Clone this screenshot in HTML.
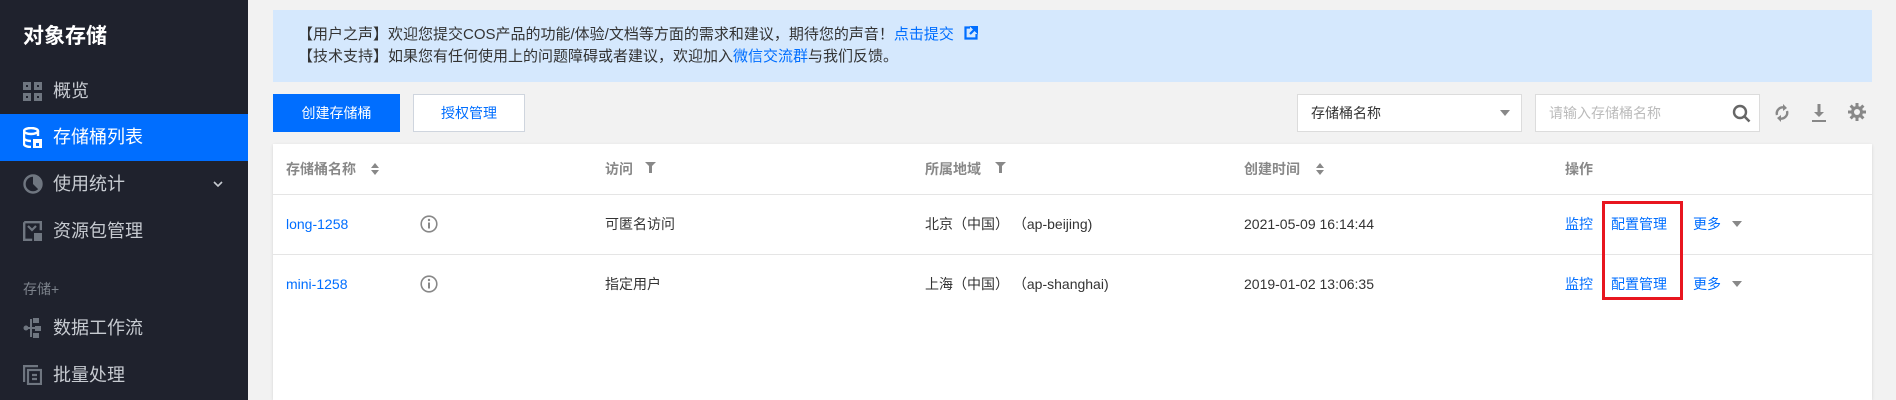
<!DOCTYPE html>
<html><head><meta charset="utf-8"><style>
*{margin:0;padding:0;box-sizing:border-box}
body{width:1896px;height:400px;overflow:hidden;background:#f2f2f2;font-family:"Liberation Sans","Noto Sans CJK SC",sans-serif;position:relative}
.a{position:absolute;white-space:nowrap}
#sb{position:absolute;left:0;top:0;width:248px;height:400px;background:#1f222d}
.mi{position:absolute;left:53px;font-size:18px;color:#c7cbd1;line-height:20px}
.ic{position:absolute;left:23px}
.t{font-size:14px;color:#333;line-height:16px}
.h{font-size:14px;color:#888;font-weight:bold;line-height:16px}
.blue{color:#006eff}
</style></head><body>
<div id="sb">
<div class="a" style="left:23px;top:20px;font-size:21px;font-weight:bold;color:#fff">对象存储</div>
<div class="a" style="left:0;top:114px;width:248px;height:47px;background:#006eff"></div>
<svg class="ic" style="top:82px" width="19" height="19"><g fill="#6f7680"><rect x="0" y="0" width="8" height="8"/><rect x="11" y="0" width="8" height="8"/><rect x="0" y="11" width="8" height="8"/><rect x="11" y="11" width="8" height="8"/></g><g fill="#1f222d"><rect x="3" y="3" width="2" height="2"/><rect x="14" y="3" width="2" height="2"/><rect x="3" y="14" width="2" height="2"/><rect x="14" y="14" width="2" height="2"/></g></svg>
<div class="mi" style="top:81px">概览</div>
<svg class="ic" style="top:127px" width="19" height="21"><g fill="none" stroke="#fff" stroke-width="2.4"><ellipse cx="8" cy="4" rx="7" ry="3"/><path d="M1 4v13c0 2 4 3 7 3M15 4v5M1 11c0 2 4 3 7 3"/></g><rect x="10" y="12" width="9" height="9" fill="#fff"/><rect x="13" y="16" width="3" height="3" fill="#006eff"/></svg>
<div class="mi" style="top:127px;color:#fff">存储桶列表</div>
<svg class="ic" style="top:174px" width="20" height="20"><circle cx="10" cy="10" r="8.5" fill="none" stroke="#6f7680" stroke-width="2.4"/><path d="M10 2A8 8 0 0 1 18 10H10Z" fill="#6f7680"/><path d="M10 10L16 16A8 8 0 0 0 18 10Z" fill="#6f7680"/></svg>
<div class="mi" style="top:174px">使用统计</div>
<svg class="a" style="left:213px;top:181px" width="10" height="7"><path d="M1 1l4 4 4-4" fill="none" stroke="#c7cbd1" stroke-width="1.6"/></svg>
<svg class="ic" style="top:221px" width="19" height="20"><path d="M1.2 1.2h16.6v8M1.2 1.2v17.6h8" fill="none" stroke="#6f7680" stroke-width="2.4"/><path d="M5 5l4 4 4-4" fill="none" stroke="#6f7680" stroke-width="2.2"/><rect x="11" y="12" width="8" height="8" fill="#6f7680"/></svg>
<div class="mi" style="top:221px">资源包管理</div>
<div class="a" style="left:23px;top:279px;font-size:14px;color:#7d838c">存储+</div>
<svg class="ic" style="top:318px" width="19" height="20"><g fill="#6f7680"><circle cx="3" cy="10" r="2.5"/><rect x="3" y="9" width="10" height="2"/><rect x="7" y="1" width="2" height="18"/><rect x="10" y="0" width="6" height="5"/><rect x="12" y="8" width="6" height="5"/><rect x="10" y="15" width="6" height="5"/></g></svg>
<div class="mi" style="top:318px">数据工作流</div>
<svg class="ic" style="top:365px" width="19" height="20"><g fill="none" stroke="#6f7680" stroke-width="2.2"><path d="M1.1 17V1.1H15"/><rect x="5" y="5" width="13" height="14"/><path d="M9 10h5M9 14h5"/></g></svg>
<div class="mi" style="top:365px">批量处理</div>
</div>

<div class="a" style="left:273px;top:10px;width:1599px;height:72px;background:#d5e8fd"></div>
<div class="a" style="left:298px;top:26px;font-size:15px;color:#333;line-height:17px">【用户之声】欢迎您提交COS产品的功能/体验/文档等方面的需求和建议，期待您的声音！<span class="blue">点击提交</span><svg style="margin-left:10px;vertical-align:-1px" width="14" height="14"><path d="M6 1.5H1.5v11h11V8" fill="none" stroke="#006eff" stroke-width="2.2"/><path d="M8 1h5v5zM12 2L6 8" fill="#006eff" stroke="#006eff" stroke-width="2.2"/></svg></div>
<div class="a" style="left:298px;top:48px;font-size:15px;color:#333;line-height:17px">【技术支持】如果您有任何使用上的问题障碍或者建议，欢迎加入<span class="blue">微信交流群</span>与我们反馈。</div>

<div class="a" style="left:273px;top:94px;width:127px;height:38px;background:#006eff;color:#fff;font-size:14px;line-height:38px;text-align:center">创建存储桶</div>
<div class="a" style="left:413px;top:94px;width:112px;height:38px;background:#fff;border:1px solid #cfd5de;color:#006eff;font-size:14px;line-height:36px;text-align:center">授权管理</div>

<div class="a" style="left:1297px;top:94px;width:225px;height:38px;background:#fff;border:1px solid #dcdcdc"></div>
<div class="a t" style="left:1311px;top:105px">存储桶名称</div>
<svg class="a" style="left:1500px;top:110px" width="10" height="6"><path d="M0 0h10L5 6z" fill="#888"/></svg>
<div class="a" style="left:1535px;top:94px;width:225px;height:38px;background:#fff;border:1px solid #dcdcdc"></div>
<div class="a" style="left:1549px;top:105px;font-size:14px;color:#bbb;line-height:16px">请输入存储桶名称</div>
<svg class="a" style="left:1732px;top:104px" width="19" height="19"><circle cx="8" cy="8" r="6" fill="none" stroke="#666" stroke-width="2.4"/><path d="M12.5 12.5l5 5" stroke="#666" stroke-width="2.6"/></svg>
<svg class="a" style="left:1774px;top:103px" width="16" height="20"><g fill="none" stroke="#888" stroke-width="2.4"><path d="M3 12A6 6 0 0 1 10 4.5"/><path d="M13 8A6 6 0 0 1 6 15.5"/></g><path d="M9 1l4 4-4 3z" fill="#888"/><path d="M7 19l-4-4 4-3z" fill="#888"/></svg>
<svg class="a" style="left:1811px;top:103px" width="16" height="20"><path d="M8 1v11" stroke="#888" stroke-width="3"/><path d="M3 9h10l-5 5z" fill="#888"/><rect x="1" y="17" width="14" height="2" fill="#888"/></svg>
<svg class="a" style="left:1848px;top:103px" width="18" height="18"><g stroke="#888" stroke-width="3"><path d="M9 0v18M0 9h18M2.6 2.6l12.8 12.8M15.4 2.6L2.6 15.4"/></g><circle cx="9" cy="9" r="6" fill="#888"/><circle cx="9" cy="9" r="3" fill="#f2f2f2"/></svg>

<div class="a" style="left:273px;top:144px;width:1599px;height:256px;background:#fff;box-shadow:0 1px 3px rgba(0,0,0,.12)"></div>
<div class="a" style="left:273px;top:194px;width:1599px;height:1px;background:#e5e5e5"></div>
<div class="a" style="left:273px;top:254px;width:1599px;height:1px;background:#e5e5e5"></div>

<div class="a h" style="left:286px;top:161px">存储桶名称</div>
<svg class="a" style="left:371px;top:163px" width="8" height="12"><path d="M4 0l4 5H0zM4 12l4-5H0z" fill="#888"/></svg>
<div class="a h" style="left:605px;top:161px">访问</div>
<svg class="a" style="left:645px;top:162px" width="11" height="11"><path d="M0 0h11L7 4v7H4V4z" fill="#888"/></svg>
<div class="a h" style="left:925px;top:161px">所属地域</div>
<svg class="a" style="left:995px;top:162px" width="11" height="11"><path d="M0 0h11L7 4v7H4V4z" fill="#888"/></svg>
<div class="a h" style="left:1244px;top:161px">创建时间</div>
<svg class="a" style="left:1316px;top:163px" width="8" height="12"><path d="M4 0l4 5H0zM4 12l4-5H0z" fill="#888"/></svg>
<div class="a h" style="left:1565px;top:161px">操作</div>

<div class="a t blue" style="left:286px;top:216px">long-1258</div>
<svg class="a" style="left:420px;top:215px" width="18" height="18"><circle cx="9" cy="9" r="7.8" fill="none" stroke="#888" stroke-width="1.6"/><rect x="8" y="7.5" width="2" height="6" fill="#888"/><circle cx="9" cy="5" r="1.2" fill="#888"/></svg>
<div class="a t" style="left:605px;top:216px">可匿名访问</div>
<div class="a t" style="left:925px;top:216px">北京（中国） （ap-beijing)</div>
<div class="a t" style="left:1244px;top:216px">2021-05-09 16:14:44</div>
<div class="a t blue" style="left:1565px;top:216px">监控</div>
<div class="a t blue" style="left:1611px;top:216px">配置管理</div>
<div class="a t blue" style="left:1693px;top:216px">更多</div>
<svg class="a" style="left:1732px;top:221px" width="10" height="6"><path d="M0 0h10L5 6z" fill="#888"/></svg>

<div class="a t blue" style="left:286px;top:276px">mini-1258</div>
<svg class="a" style="left:420px;top:275px" width="18" height="18"><circle cx="9" cy="9" r="7.8" fill="none" stroke="#888" stroke-width="1.6"/><rect x="8" y="7.5" width="2" height="6" fill="#888"/><circle cx="9" cy="5" r="1.2" fill="#888"/></svg>
<div class="a t" style="left:605px;top:276px">指定用户</div>
<div class="a t" style="left:925px;top:276px">上海（中国） （ap-shanghai)</div>
<div class="a t" style="left:1244px;top:276px">2019-01-02 13:06:35</div>
<div class="a t blue" style="left:1565px;top:276px">监控</div>
<div class="a t blue" style="left:1611px;top:276px">配置管理</div>
<div class="a t blue" style="left:1693px;top:276px">更多</div>
<svg class="a" style="left:1732px;top:281px" width="10" height="6"><path d="M0 0h10L5 6z" fill="#888"/></svg>

<div class="a" style="left:1602px;top:201px;width:81px;height:99px;border:3px solid #e8161f"></div>
</body></html>
